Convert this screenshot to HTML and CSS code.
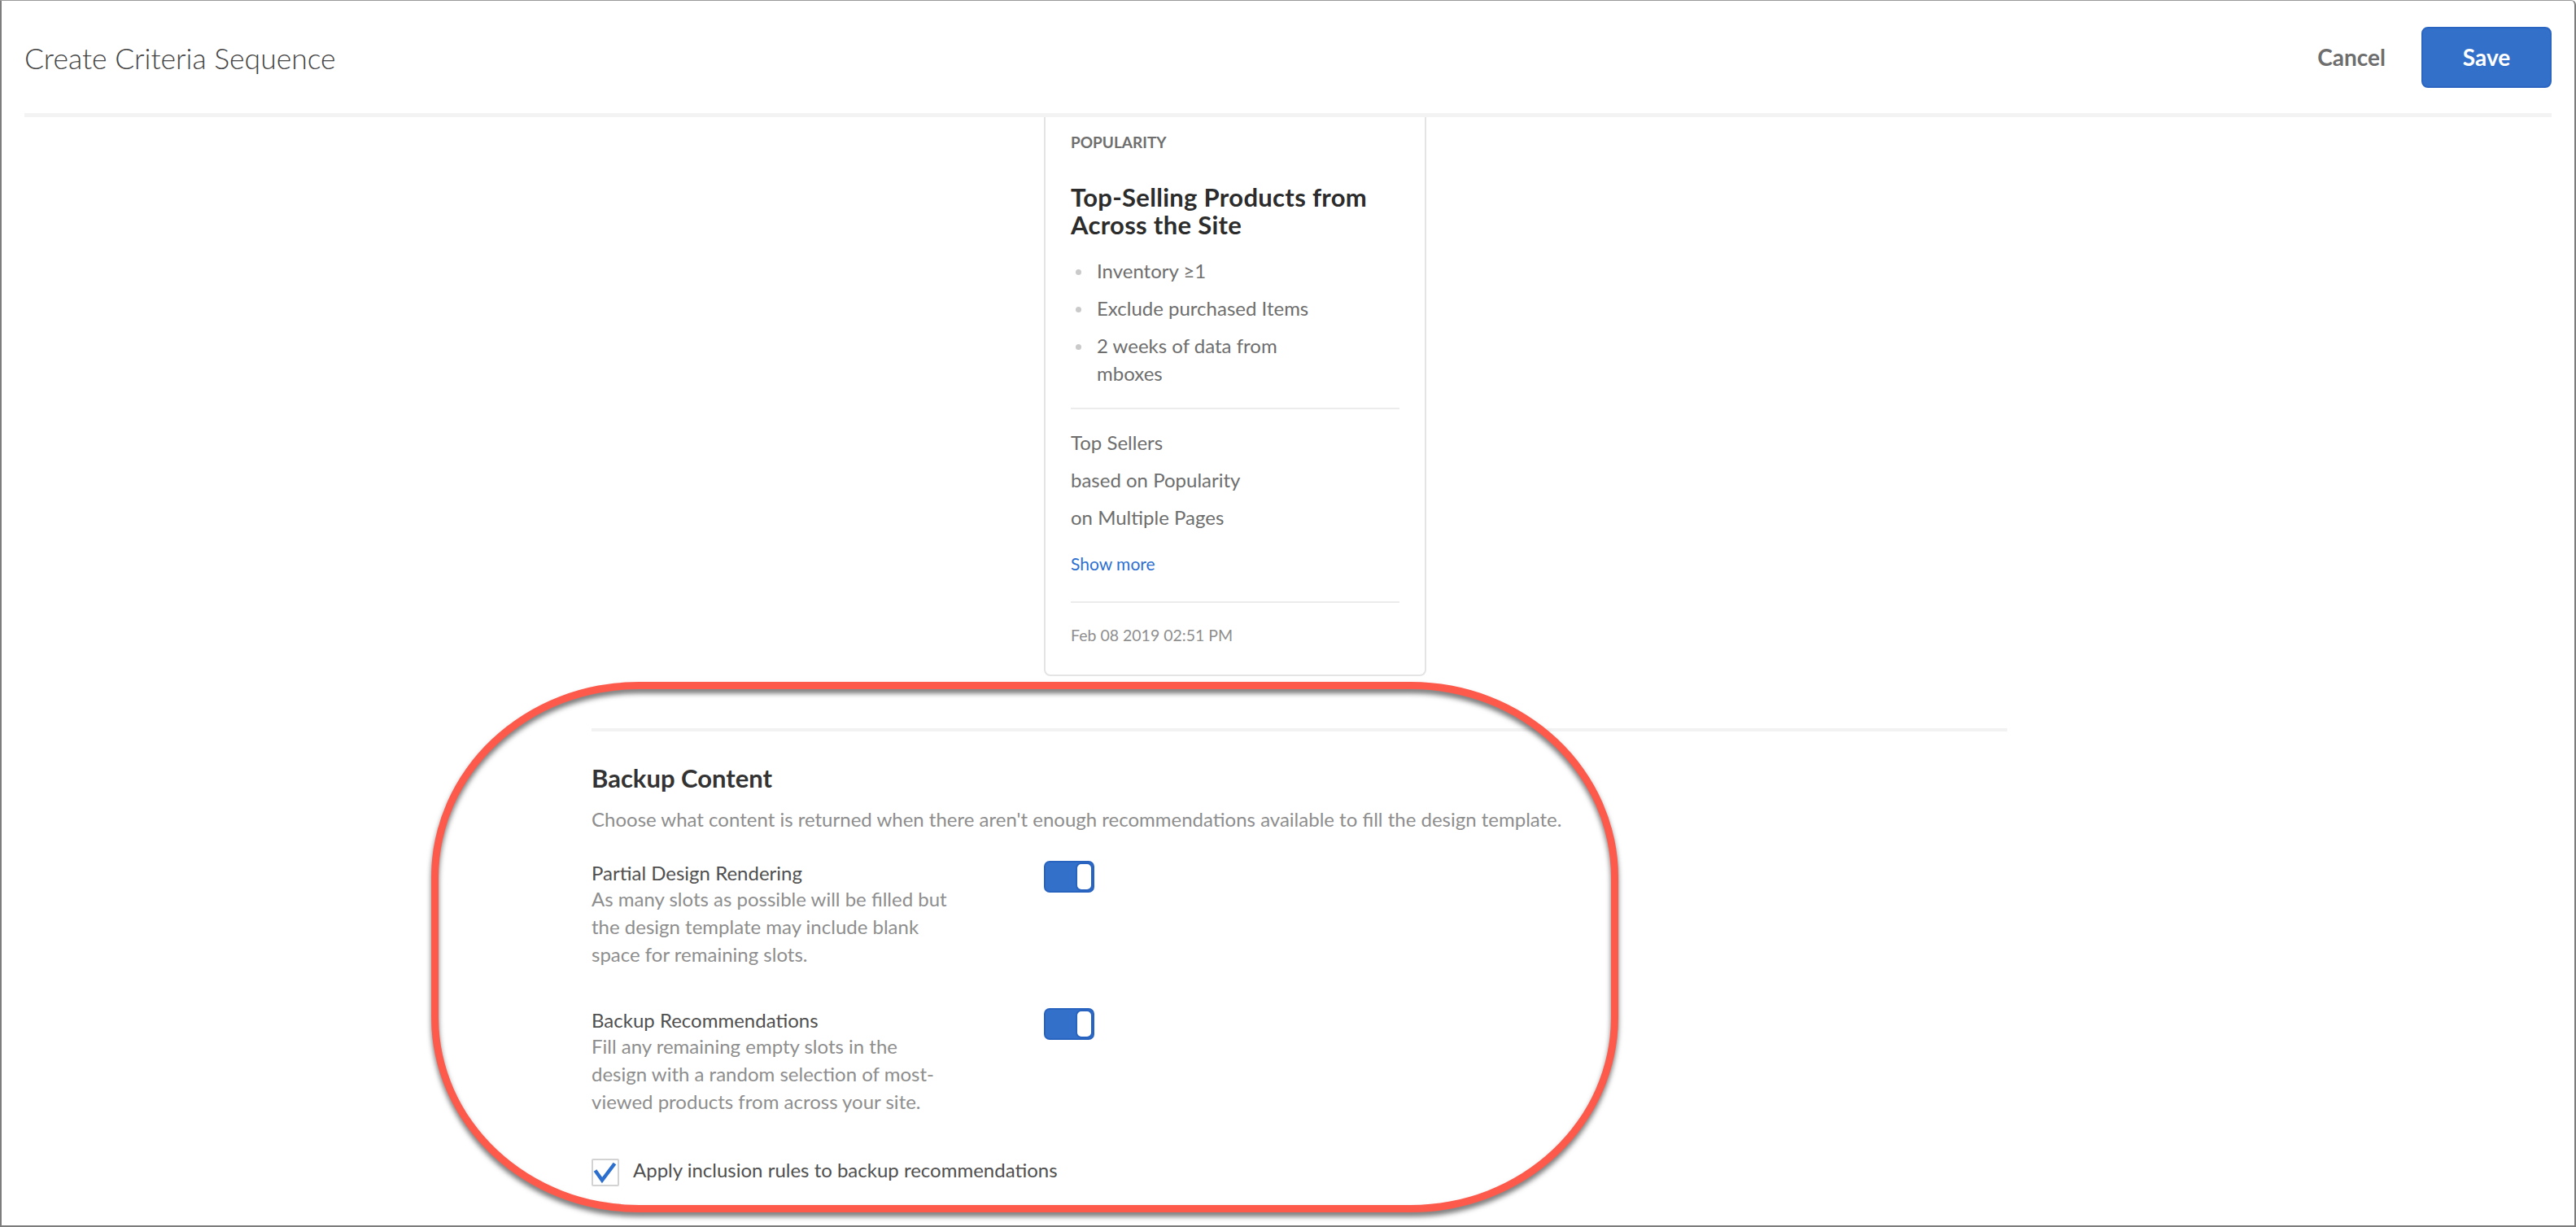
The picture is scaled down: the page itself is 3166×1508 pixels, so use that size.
FILE: index.html
```html
<!DOCTYPE html>
<html lang="en">
<head>
<meta charset="utf-8">
<title>Create Criteria Sequence</title>
<link rel="stylesheet" href="styles.css">
</head>
<body>
<div class="window">
  <header class="topbar">
    <h1 class="title">Create Criteria Sequence</h1>
    <div class="actions">
      <button class="btn-cancel" type="button">Cancel</button>
      <button class="btn-save" type="button">Save</button>
    </div>
  </header>
  <div class="topbar-rule"></div>

  <main class="content">
    <div class="seq">
      <article class="card">
        <div class="card-kicker">POPULARITY</div>
        <h2 class="card-title">Top-Selling Products from Across the Site</h2>
        <ul class="card-list">
          <li>Inventory ≥1</li>
          <li>Exclude purchased Items</li>
          <li>2 weeks of data from mboxes</li>
        </ul>
        <div class="card-rule"></div>
        <div class="card-desc">
          <p>Top Sellers</p>
          <p>based on Popularity</p>
          <p>on Multiple Pages</p>
        </div>
        <a class="card-more" href="#">Show more</a>
        <div class="card-rule card-rule-2"></div>
        <div class="card-date">Feb 08 2019 02:51 PM</div>
      </article>
    </div>

    <section class="backup">
      <div class="backup-rule"></div>
      <h2 class="backup-title">Backup Content</h2>
      <p class="backup-intro">Choose what content is returned when there aren't enough recommendations available to fill the design template.</p>

      <div class="opt-row">
        <div class="opt-text">
          <div class="opt-label">Partial Design Rendering</div>
          <div class="opt-desc">As many slots as possible will be filled but<br>the design template may include blank<br>space for remaining slots.</div>
        </div>
        <span class="switch"><span class="knob"></span></span>
      </div>

      <div class="opt-row opt-row-2">
        <div class="opt-text">
          <div class="opt-label">Backup Recommendations</div>
          <div class="opt-desc">Fill any remaining empty slots in the<br>design with a random selection of most-<br>viewed products from across your site.</div>
        </div>
        <span class="switch"><span class="knob"></span></span>
      </div>

      <label class="check-row">
        <span class="checkbox">
          <svg width="30" height="30" viewBox="0 0 30 30"><path d="M2.5 12.5 L11 24.5 L26.5 4" fill="none" stroke="#2c6fce" stroke-width="4.5"/></svg>
        </span>
        <span class="check-label">Apply inclusion rules to backup recommendations</span>
      </label>
    </section>
  </main>

  <div class="annotation"></div>
</div>
</body>
</html>
```

FILE: styles.css
```css
html, body {
  margin: 0;
  padding: 0;
  background: #ffffff;
}

body {
  font-family: "Lato", "Open Sans", "Liberation Sans", sans-serif;
  color: #4b4b4b;
}

.window {
  position: relative;
  box-sizing: border-box;
  width: 3166px;
  height: 1508px;
  border: 2px solid #7d7d7d;
  border-top: 1px solid #9a9a9a;
  border-top-right-radius: 6px;
  overflow: hidden;
  background: #ffffff;
}

/* ---------- header ---------- */
.topbar {
  display: flex;
  align-items: center;
  justify-content: space-between;
  height: 138px;
  padding: 0 28px;
}

.title {
  margin: 3px 0 0;
  font-weight: 300;
  font-size: 35.5px;
  line-height: 44px;
  color: #444444;
}

.actions {
  display: flex;
  align-items: center;
  gap: 44px;
}

.btn-cancel {
  background: none;
  border: 0;
  padding: 0;
  font-family: inherit;
  font-weight: 700;
  font-size: 28px;
  color: #6e6e6e;
}

.btn-save {
  box-sizing: border-box;
  width: 160px;
  height: 75px;
  background: #3370c9;
  border: 2px solid #2b65c2;
  border-radius: 8px;
  color: #ffffff;
  font-family: inherit;
  font-weight: 700;
  font-size: 28px;
}

.topbar-rule {
  height: 5px;
  margin: 0 28px;
  background: #f3f3f3;
}

/* ---------- content ---------- */
.content {
  width: 1740px;
  margin-left: 725px;
}

.seq {
  padding-left: 556px;
}

.card {
  box-sizing: border-box;
  width: 470px;
  border: 2px solid #e4e4e4;
  border-top: 0;
  border-radius: 0 0 8px 8px;
  padding: 19px 31px 33px;
}

.card-kicker {
  font-weight: 700;
  font-size: 19px;
  line-height: 24px;
  color: #6e6e6e;
}

.card-title {
  margin: 38px 0 0;
  font-weight: 700;
  font-size: 31px;
  line-height: 34px;
  letter-spacing: 0.3px;
  color: #2c2c2c;
}

.card-list {
  list-style: none;
  margin: 23px 0 0;
  padding: 0 0 0 32px;
}

.card-list li {
  position: relative;
  max-width: 285px;
  font-size: 24px;
  line-height: 34px;
  color: #6e6e6e;
}

.card-list li + li {
  margin-top: 12px;
}

.card-list li::before {
  content: "";
  position: absolute;
  left: -26px;
  top: 15px;
  width: 7px;
  height: 7px;
  border-radius: 50%;
  background: #cacaca;
}

.card-rule {
  height: 2px;
  margin-top: 25px;
  background: #ececec;
}

.card-desc {
  margin-top: 18px;
}

.card-desc p {
  margin: 0;
  font-size: 24px;
  line-height: 46px;
  color: #6e6e6e;
}

.card-more {
  display: block;
  margin-top: 19px;
  font-size: 21px;
  line-height: 30px;
  color: #2d6fcf;
  text-decoration: none;
}

.card-rule-2 {
  margin-top: 31px;
}

.card-date {
  margin-top: 25px;
  font-size: 19.5px;
  line-height: 30px;
  color: #8e8e8e;
}

/* ---------- backup section ---------- */
.backup {
  margin-top: 64px;
}

.backup-rule {
  height: 4px;
  background: #f2f2f2;
}

.backup-title {
  margin: 39px 0 0;
  font-weight: 700;
  font-size: 31px;
  line-height: 36px;
  color: #333333;
}

.backup-intro {
  margin: 16px 0 0;
  font-size: 24px;
  line-height: 34px;
  color: #8e8e8e;
}

.opt-row {
  display: grid;
  grid-template-columns: 556px 62px;
  align-items: start;
  margin-top: 33px;
}

.opt-row-2 {
  margin-top: 48px;
}

.opt-label {
  font-size: 24px;
  line-height: 31px;
  color: #505050;
}

.opt-desc {
  font-size: 24px;
  line-height: 34px;
  color: #8e8e8e;
}

.switch {
  box-sizing: border-box;
  display: flex;
  justify-content: flex-end;
  width: 62px;
  height: 39px;
  margin-top: 1px;
  background: #3370c9;
  border: 2px solid #2863c0;
  border-radius: 7px;
}

.knob {
  box-sizing: border-box;
  width: 21px;
  height: 35px;
  background: #ffffff;
  border: 2px solid #2863c0;
  border-radius: 7px;
}

.check-row {
  display: flex;
  align-items: flex-start;
  margin-top: 50px;
}

.checkbox {
  box-sizing: border-box;
  display: flex;
  align-items: center;
  justify-content: center;
  width: 34px;
  height: 34px;
  margin: 3px 17px 0 0;
  border: 2px solid #d3d3d3;
  border-radius: 2px;
  background: #ffffff;
}

.check-label {
  font-size: 24px;
  line-height: 34px;
  color: #505050;
}

/* ---------- hand-drawn annotation ---------- */
.annotation {
  position: absolute;
  left: 528px;
  top: 837px;
  box-sizing: border-box;
  width: 1459px;
  height: 652px;
  border: 9px solid #fd5a4b;
  border-radius: 255px / 240px;
  filter: drop-shadow(0 5px 3px rgba(0, 0, 0, 0.55));
  pointer-events: none;
}
```
